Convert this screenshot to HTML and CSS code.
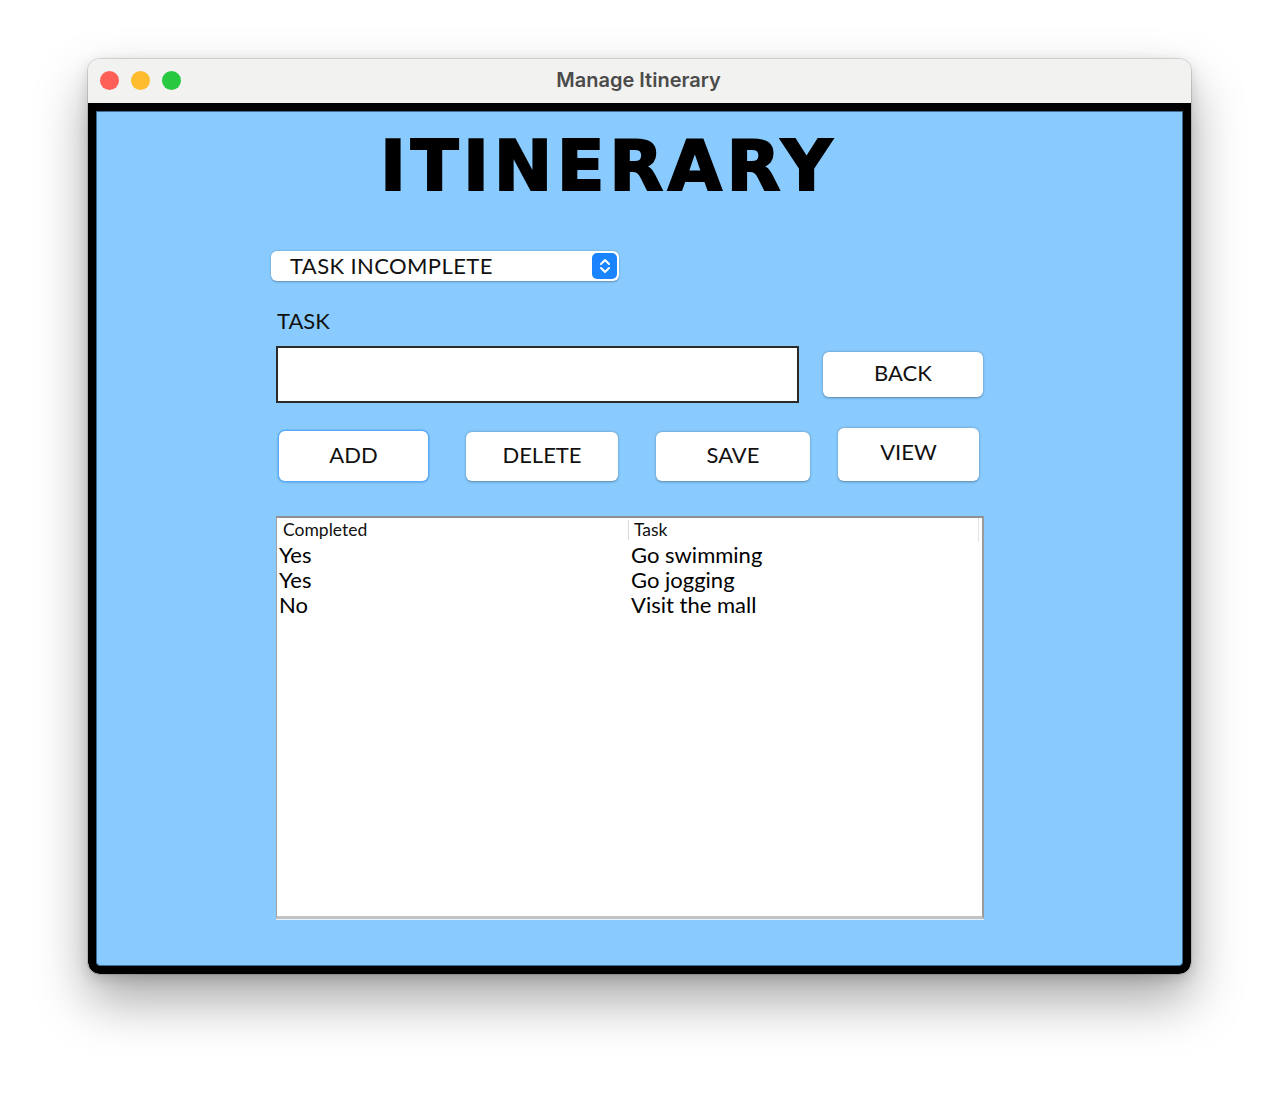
FILE: index.html
```html
<!DOCTYPE html>
<html>
<head>
<meta charset="utf-8">
<link rel="stylesheet" href="styles.css">
</head>
<body>
<div class="stage">
  <div class="window">
    <div class="titlebar">
      <div class="lights">
        <span class="light red"></span>
        <span class="light yellow"></span>
        <span class="light green"></span>
      </div>
      <div class="wtitle">Manage Itinerary</div>
    </div>
    <div class="frame">
      <div class="content">
        <h1 class="heading">ITINERARY</h1>
        <div class="combo">
          <span class="combo-text">TASK INCOMPLETE</span>
          <span class="combo-btn">
            <svg width="14" height="20" viewBox="0 0 14 20"><path d="M3 8 L7 4 L11 8 M3 12 L7 16 L11 12" fill="none" stroke="#fff" stroke-width="2" stroke-linecap="round" stroke-linejoin="round"/></svg>
          </span>
        </div>
        <div class="label">TASK</div>
        <div class="form-row">
          <div class="field"></div>
          <button class="btn btn-back">BACK</button>
        </div>
        <div class="btn-row">
          <button class="btn btn-add">ADD</button>
          <button class="btn btn-delete">DELETE</button>
          <button class="btn btn-save">SAVE</button>
          <button class="btn btn-view">VIEW</button>
        </div>
        <div class="table">
          <div class="thead">
            <div class="th th1">Completed</div>
            <div class="th th2">Task</div>
          </div>
          <div class="tr"><div class="td td1">Yes</div><div class="td td2">Go swimming</div></div>
          <div class="tr"><div class="td td1">Yes</div><div class="td td2">Go jogging</div></div>
          <div class="tr"><div class="td td1">No</div><div class="td td2">Visit the mall</div></div>
        </div>
      </div>
    </div>
  </div>
</div>
</body>
</html>
```
FILE: styles.css
```css
html, body {
  margin: 0;
  padding: 0;
  background: #ffffff;
}
.stage {
  padding: 59px 0 0 88px;
  height: 1093px;
  box-sizing: border-box;
}
.window {
  width: 1103px;
  height: 915px;
  border-radius: 12px;
  overflow: hidden;
  box-shadow: 0 0 0 1px rgba(0,0,0,0.12), 0 26px 52px rgba(0,0,0,0.35), 0 4px 14px rgba(0,0,0,0.15);
  display: flex;
  flex-direction: column;
}
.titlebar {
  height: 44px;
  background: #f2f2f0;
  position: relative;
  display: flex;
  align-items: center;
  justify-content: center;
  flex: none;
}
.lights {
  position: absolute;
  left: 12px;
  top: 12px;
  display: flex;
  gap: 12px;
}
.light {
  width: 19px;
  height: 19px;
  border-radius: 50%;
  display: block;
}
.red { background: #fe5f57; }
.yellow { background: #febc2e; }
.green { background: #28c840; }
.wtitle {
  font-family: Inter, "Noto Sans", sans-serif;
  font-weight: 600;
  font-size: 20px;
  color: #4b4b4b;
  margin-top: -2px;
  padding-right: 2px;
}
.frame {
  flex: 1;
  background: #000;
  padding: 8px 8px 8px 8px;
  border-radius: 0 0 12px 12px;
  display: flex;
}
.content {
  flex: 1;
  background: #89cbfe;
  border: 1px solid #3b6d96;
  border-radius: 0 0 4px 4px;
  padding-left: 174px;
  font-family: Lato, "Open Sans", sans-serif;
  color: #111;
}
.heading {
  margin: 14px 0 0 109px;
  font-family: "DejaVu Sans", sans-serif;
  font-weight: 900;
  font-size: 70px;
  line-height: 80px;
  letter-spacing: 4.6px;
  color: #000;
  -webkit-text-stroke: 2px #000;
}
.combo {
  margin-top: 45px;
  width: 348px;
  height: 30px;
  box-sizing: border-box;
  background: #fff;
  border-radius: 6px;
  box-shadow: 0 0.5px 2px rgba(0,0,0,0.3);
  display: flex;
  align-items: center;
  justify-content: space-between;
  padding: 0 2px 0 19px;
}
.combo-text {
  font-size: 22px;
  letter-spacing: 0.4px;
  color: #111;
  margin-top: -2px;
}
.combo-btn {
  width: 25px;
  height: 26px;
  background: #1a84ff;
  border-radius: 5px;
  display: flex;
  align-items: center;
  justify-content: center;
}
.label {
  margin: 27px 0 0 6px;
  font-size: 22px;
  line-height: 26px;
}
.form-row {
  margin: 12px 0 0 5px;
  display: flex;
  align-items: center;
  gap: 24px;
}
.field {
  width: 523px;
  height: 57px;
  box-sizing: border-box;
  background: #fff;
  border: 2px solid #2b2b2b;
}
.btn {
  font-family: Lato, "Open Sans", sans-serif;
  font-size: 22px;
  color: #111;
  background: #fff;
  border: none;
  border-radius: 6px;
  box-shadow: 0 0.5px 2.5px rgba(0,0,0,0.35);
  padding: 0 0 4px 0;
  margin: 0;
}
.btn-back {
  width: 160px;
  height: 45px;
  margin-top: 0px;
}
.btn-row {
  margin: 25px 0 0 8px;
  display: flex;
  align-items: flex-start;
}
.btn-add {
  width: 149px;
  height: 50px;
  margin-top: 3px;
  box-shadow: 0 0 0 1.5px #5aacf6, 0 1px 3px rgba(0,0,0,0.25);
}
.btn-delete {
  width: 152px;
  height: 49px;
  margin: 4px 0 0 38px;
}
.btn-save {
  width: 154px;
  height: 49px;
  margin: 4px 0 0 38px;
}
.btn-view {
  width: 141px;
  height: 53px;
  margin: 0 0 0 28px;
  padding-bottom: 6px;
}
.table {
  margin: 35px 0 0 5px;
  width: 708px;
  height: 403px;
  box-sizing: border-box;
  background: #fff;
  border-top: 2px solid #8d9196;
  border-left: 1px solid #a0a0a0;
  border-right: 2px solid #9a9a9a;
  border-bottom: 3px solid #c2c2c2;
  box-shadow: 0 1px 0 #e6f2fc;
}
.thead {
  display: flex;
  height: 24px;
  align-items: center;
  margin-right: 3px;
  border-right: 1px solid #e3e3e3;
}
.th {
  font-size: 17.5px;
  line-height: 20px;
  color: #111;
}
.th1 {
  width: 345px;
  padding-left: 6px;
  border-right: 1px solid #dcdcdc;
}
.th2 {
  padding-left: 5px;
}
.tr {
  display: flex;
  height: 25px;
  align-items: center;
}
.td {
  font-size: 22px;
  line-height: 25px;
  color: #000;
}
.td1 {
  width: 352px;
  padding-left: 2px;
}
.td2 {
  padding-left: 0;
}
```
